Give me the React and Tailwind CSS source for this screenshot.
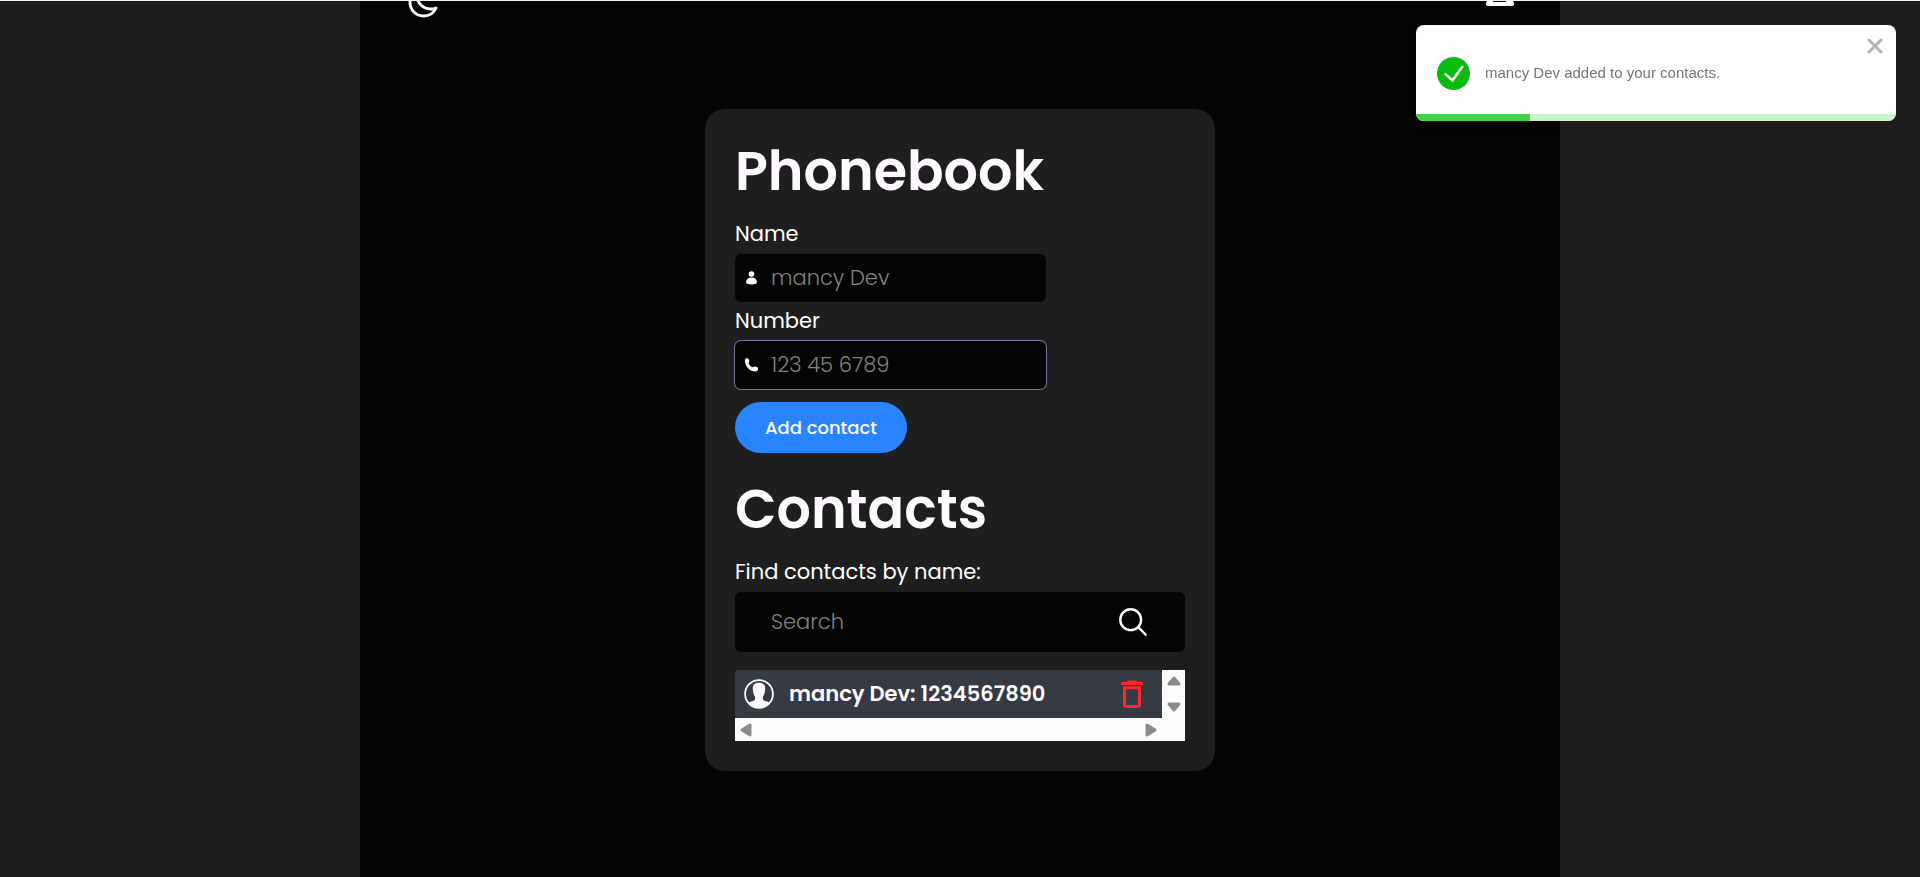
import { IoMoonOutline, IoSearchOutline } from "react-icons/io5";

const labelClass = "block text-[21px] leading-[32px] text-white";
const headingClass = "text-[54px] leading-[64px] font-semibold text-[#fffaff]";

function Field({ id, label, placeholder, type, icon, ring }) {
  return (
    <div>
      <label htmlFor={id} className={labelClass}>{label}</label>
      <div className={`mt-1 flex h-12 w-[311px] max-w-full items-center gap-3 rounded-md bg-[#040404] pl-2 ${ring}`}>
        {icon}
        <input id={id} type={type} placeholder={placeholder} className="min-w-0 flex-1 bg-transparent text-[21px] font-light text-white outline-none placeholder:text-[#828282]" />
      </div>
    </div>
  );
}

function PersonIcon() {
  return (
    <svg viewBox="0 0 16 16" className="size-4 shrink-0 fill-[#fffaff]" aria-hidden="true">
      <circle cx="8.500" cy="4" r="2.800" />
      <path d="M3.100 12.600C3.100 9.600 5.100 7.600 8.500 7.600s5.400 2 5.400 5c0 1.300-2.400 2-5.400 2s-5.400-.7-5.400-2z" />
    </svg>
  );
}

function PhoneIcon() {
  return (
    <svg viewBox="0 0 16 16" className="size-4 shrink-0 fill-[#fffaff]" aria-hidden="true">
      <path d="M1.900 3.400C1.800 1.800 3.100 1.300 4 1.300c1.100 0 1.800.5 2.100 1.800.4 1.600-.1 2.300-.5 2.900.6 2 2.300 3.700 4.300 4.300.8-.6 1.800-.9 3.100-.5 1.600.4 2.200 1 2.100 2.300-.1 1.600-1.100 2.300-2.500 2.300C6.800 14.400 2.100 9.500 1.900 3.400z" />
    </svg>
  );
}

function AvatarIcon() {
  return (
    <svg viewBox="0 0 30 30" className="size-[30px] shrink-0" aria-hidden="true">
      <circle cx="15" cy="15" r="13.900" fill="none" stroke="#fffaff" strokeWidth="1.800" />
      <path fill="#fffaff" d="M15 3.800c-4 0-6.300 1.600-6.200 5.600.1 3.700.9 6.600 2.300 8.400v2.800c-1 1.700-4.600 1.900-7.400 3.200 3 3.600 7.100 5.400 11.300 5.400s8.300-1.800 11.300-5.400c-2.800-1.300-6.400-1.500-7.400-3.200v-2.800c1.400-1.800 2.200-4.700 2.300-8.400.1-4-2.200-5.600-6.200-5.600z" />
    </svg>
  );
}

function TrashIcon() {
  return (
    <svg viewBox="0 0 22 28" className="h-7 w-[22px] fill-[#ff2929]" aria-hidden="true">
      <path d="M0 2h5.500L7 .4h8L16.500 2H22v3H0z" />
      <path fillRule="evenodd" d="M2 6.300h18V25a3 3 0 0 1-3 3H5a3 3 0 0 1-3-3zM5 9.300V25h12V9.300z" />
    </svg>
  );
}

function Arrow({ d }) {
  return (
    <svg viewBox="0 0 16 16" className="size-4 fill-[#8b8b8b] stroke-[#8b8b8b]" strokeWidth="3" strokeLinejoin="round" aria-hidden="true">
      <path d={d} />
    </svg>
  );
}

function Toast() {
  return (
    <div role="alert" className="fixed top-[25px] right-6 flex h-24 w-[480px] items-center overflow-hidden rounded-lg bg-white pl-[21px] font-['Liberation_Sans',Arial,sans-serif] shadow-[0_4px_12px_rgba(0,0,0,0.1)]">
      <svg viewBox="0 0 33 33" className="size-[33px] shrink-0" aria-hidden="true">
        <circle cx="16.500" cy="16.500" r="16.500" fill="#07bc0c" />
        <path d="M8.500 17.300l7 6.200L25.300 9.800" fill="none" stroke="#fff" strokeWidth="2.500" strokeLinecap="round" />
      </svg>
      <p className="ml-[15px] text-[15px] leading-6 text-[#757575]">mancy Dev added to your contacts.</p>
      <button type="button" aria-label="Close" className="absolute top-[13px] right-[13px]">
        <svg viewBox="0 0 16 16" className="size-4 stroke-[#b3b3b3]" strokeWidth="3" strokeLinecap="round" aria-hidden="true">
          <path d="M2 2l12 12M14 2L2 14" />
        </svg>
      </button>
      <div className="absolute inset-x-0 bottom-0 h-[7px] bg-[#cdf2ce]">
        <div className="h-full bg-[#45d049]" style={{ width: "23.7%" }} />
      </div>
    </div>
  );
}

export default function App() {
  return (
    <div className="min-h-screen border-t border-[#f4f2ea] bg-[#1e1e1e] font-[Poppins,Inter,sans-serif]">
      <div className="mx-auto min-h-[calc(100vh-1px)] max-w-[1200px] bg-[#040404]">
        <header className="flex h-[18px] items-end justify-between overflow-hidden pr-[45px] pl-[47px]">
          <button type="button" aria-label="Toggle theme" className="shrink-0 text-[#fffaff]">
            <IoMoonOutline className="size-8 [&_path]:[stroke-width:46px]" />
          </button>
          <button type="button" aria-label="Account" className="h-[15px] shrink-0 self-start overflow-hidden text-[#fffaff]">
            <svg viewBox="0 0 30 15" className="h-[15px] w-[30px]" fill="none" aria-hidden="true">
              <path d="M2 0h26l1 2v1a2 2 0 0 1-2 2H3a2 2 0 0 1-2-2V2z" fill="currentColor" />
              <path d="M8 0h13v1H8z" fill="#040404" />
            </svg>
          </button>
        </header>
        <main className="px-4 pt-[90px] pb-16">
          <div className="mx-auto w-full max-w-[510px] rounded-[20px] bg-[#1e1e1e] p-[30px]">
            <h1 className={headingClass}>Phonebook</h1>
            <form className="mt-[15px] flex flex-col gap-[3px]" onSubmit={(e) => e.preventDefault()}>
              <Field id="name" label="Name" type="text" placeholder="mancy Dev" icon={<PersonIcon />} ring="" />
              <Field id="number" label="Number" type="tel" placeholder="123 45 6789" icon={<PhoneIcon />} ring="shadow-md ring-1 ring-[#75759f]" />
              <button type="submit" className="mt-[10px] h-[51px] w-[172px] rounded-full bg-[#2a83ff] text-[18px] font-medium text-[#fffaff]">Add contact</button>
            </form>
            <h2 className={`mt-6 ${headingClass}`}>Contacts</h2>
            <div className="mt-[15px]">
              <label htmlFor="search" className={labelClass}>Find contacts by name:</label>
              <div className="mt-1 flex h-[60px] items-center rounded-md bg-[#040404] pr-[35px] pl-9">
                <input id="search" type="text" placeholder="Search" className="min-w-0 flex-1 bg-transparent text-[21px] font-light text-white outline-none placeholder:text-[#828282]" />
                <IoSearchOutline className="size-[34px] text-[#fffaff] [&_path]:[stroke-width:36px]" aria-hidden="true" />
              </div>
            </div>
            <div className="mt-[18px] grid grid-cols-[1fr_23px] bg-[#fcfcfc]">
              <ul className="bg-[#1e1e1e]">
                <li className="flex h-12 items-center rounded-[3px] bg-[#363a42] pr-[19px] pl-[9px] text-[21px] font-semibold text-[#fffaff]">
                  <AvatarIcon />
                  <span className="ml-[15px] flex-1">mancy Dev: 1234567890</span>
                  <button type="button" aria-label="Delete mancy Dev"><TrashIcon /></button>
                </li>
              </ul>
              <div className="flex flex-col items-center justify-between py-[3px]">
                <Arrow d="M8 5L13 11H3z" />
                <Arrow d="M8 11L13 5H3z" />
              </div>
              <div className="flex h-[23px] items-center justify-between px-1">
                <Arrow d="M3 8L11 3V13z" />
                <Arrow d="M13 8L5 3V13z" />
              </div>
            </div>
          </div>
        </main>
      </div>
      <Toast />
    </div>
  );
}
